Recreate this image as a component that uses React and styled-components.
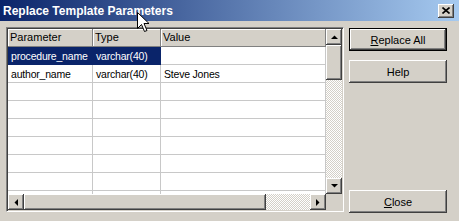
import React from 'react';
import styled, { createGlobalStyle, css } from 'styled-components';

const Global = createGlobalStyle`
  html, body { margin: 0; padding: 0; background: #d4d0c8; }
  * { box-sizing: border-box; }
`;

const Dialog = styled.div`
  position: relative;
  width: 459px;
  height: 221px;
  overflow: hidden;
  background: #d4d0c8;
  font-family: "Liberation Sans", Arial, sans-serif;
  font-size: 11px;
  color: #000;
`;

const TitleBar = styled.div`
  height: 21px;
  display: flex;
  align-items: center;
  justify-content: space-between;
  padding: 0 5px 0 3px;
  background: linear-gradient(to right, #0a246a, #a6caf0);
`;

const Title = styled.span`
  color: #fff;
  font-weight: bold;
  font-size: 12px;
`;

const raised = css`
  background: #d4d0c8;
  box-shadow: inset -1px -1px #404040, inset 1px 1px #fff,
    inset -2px -2px #808080, inset 2px 2px #d4d0c8;
`;

const CloseBox = styled.div`
  ${raised};
  width: 16px;
  height: 14px;
  display: flex;
  align-items: center;
  justify-content: center;
  padding-right: 1px;
`;

const Body = styled.div`
  display: flex;
  gap: 5px;
  padding: 6px 0 0 6px;
`;

const GridFrame = styled.div`
  width: 338px;
  height: 185px;
  border: 1px solid;
  border-color: #808080 #fff #fff #808080;
  padding: 1px;
  box-shadow: inset 1px 1px #404040, inset -1px -1px #d4d0c8;
  display: grid;
  grid-template-columns: 1fr 16px;
  grid-template-rows: 1fr 16px;
`;

const Content = styled.div`
  background: #fff;
  overflow: hidden;
`;

const cols = css`
  display: grid;
  grid-template-columns: 85px 68px 1fr;
  height: 18px;
`;

const HeaderRow = styled.div`
  ${cols};
`;

const HeaderCell = styled.div`
  background: #d4d0c8;
  padding: 2px 0 0 2px;
  box-shadow: inset -1px -1px #808080, inset 1px 1px #fff;
  white-space: nowrap;
`;

const Row = styled.div`
  ${cols};
`;

const Cell = styled.div`
  padding: 3px 0 0 3px;
  font-size: 10.5px;
  letter-spacing: -0.2px;
  white-space: nowrap;
  overflow: hidden;
  border-right: 1px solid #c8c8c8;
  border-bottom: 1px solid #c8c8c8;
  ${(p) =>
    p.$selected &&
    css`
      background: #0a246a;
      color: #fff;
      border-right-color: #0a246a;
      border-bottom-color: #0a246a;
    `}
`;

const checker = css`
  background: repeating-conic-gradient(#d4d0c8 0 25%, #fff 0 50%) 0 0 / 2px 2px;
`;

const VScroll = styled.div`
  display: flex;
  flex-direction: column;
  ${checker};
`;

const HScroll = styled.div`
  display: flex;
  ${checker};
`;

const ScrollButton = styled.div`
  ${raised};
  width: 16px;
  height: 16px;
  flex: none;
  display: flex;
  align-items: center;
  justify-content: center;
`;

const Thumb = styled.div`
  ${raised};
  flex: none;
  ${(p) => (p.$vertical ? `height: ${p.$size}px;` : `width: ${p.$size}px;`)}
`;

const Spacer = styled.div`
  flex: 1;
`;

const Corner = styled.div`
  background: #d4d0c8;
`;

const ButtonColumn = styled.div`
  width: 98px;
  height: 186px;
  display: flex;
  flex-direction: column;
  padding-top: 1px;
`;

const PushButton = styled.div`
  ${raised};
  height: 23px;
  display: flex;
  align-items: center;
  justify-content: center;
  margin-top: ${(p) => p.$top || 0};
  ${(p) =>
    p.$default &&
    css`
      border: 1px solid #000;
    `}
  u { text-decoration: underline; text-underline-offset: 1px; }
`;

const Cursor = styled.svg`
  position: absolute;
  left: 137px;
  top: 12px;
`;

const Arrow = ({ dir }) => {
  const pts = {
    up: '0,4 7,4 3.5,0.5',
    down: '0,0 7,0 3.5,3.5',
    left: '4,0 4,7 0.5,3.5',
    right: '0,0 0,7 3.5,3.5',
  }[dir];
  const w = dir === 'up' || dir === 'down' ? 7 : 4;
  const h = dir === 'up' || dir === 'down' ? 4 : 7;
  return (
    <svg width={w} height={h} viewBox={`0 0 ${w} ${h}`}>
      <polygon points={pts} fill="#000" />
    </svg>
  );
};

const rows = [
  { name: 'procedure_name', type: 'varchar(40)', value: '', selected: true },
  { name: 'author_name', type: 'varchar(40)', value: 'Steve Jones' },
  ...Array.from({ length: 7 }, () => ({ name: '', type: '', value: '' })),
];

export default function App() {
  return (
    <Dialog>
      <Global />
      <TitleBar>
        <Title>Replace Template Parameters</Title>
        <CloseBox>
          <svg width="8" height="7" viewBox="0 0 8 7">
            <path d="M0.5 0.5 L7.5 6.5 M7.5 0.5 L0.5 6.5" stroke="#000" strokeWidth="1.6" />
          </svg>
        </CloseBox>
      </TitleBar>
      <Body>
        <GridFrame>
          <Content>
            <HeaderRow>
              <HeaderCell>Parameter</HeaderCell>
              <HeaderCell>Type</HeaderCell>
              <HeaderCell>Value</HeaderCell>
            </HeaderRow>
            {rows.map((r, i) => (
              <Row key={i}>
                <Cell $selected={r.selected}>{r.name}</Cell>
                <Cell $selected={r.selected}>{r.type}</Cell>
                <Cell>{r.value}</Cell>
              </Row>
            ))}
          </Content>
          <VScroll>
            <ScrollButton><Arrow dir="up" /></ScrollButton>
            <Thumb $vertical $size={35} />
            <Spacer />
            <ScrollButton><Arrow dir="down" /></ScrollButton>
          </VScroll>
          <HScroll>
            <ScrollButton><Arrow dir="left" /></ScrollButton>
            <Thumb $size={242} />
            <Spacer />
            <ScrollButton><Arrow dir="right" /></ScrollButton>
          </HScroll>
          <Corner />
        </GridFrame>
        <ButtonColumn>
          <PushButton $default><span><u>R</u>eplace All</span></PushButton>
          <PushButton $top="9px">Help</PushButton>
          <Spacer />
          <PushButton><span><u>C</u>lose</span></PushButton>
        </ButtonColumn>
      </Body>
      <Cursor width="13" height="21" viewBox="0 0 13 21">
        <path d="M0.5 0.5 L0.5 16.5 L4.5 12.5 L7.5 19.5 L10 18.5 L7 11.5 L12 11.5 Z" fill="#fff" stroke="#000" strokeWidth="1" />
      </Cursor>
    </Dialog>
  );
}
